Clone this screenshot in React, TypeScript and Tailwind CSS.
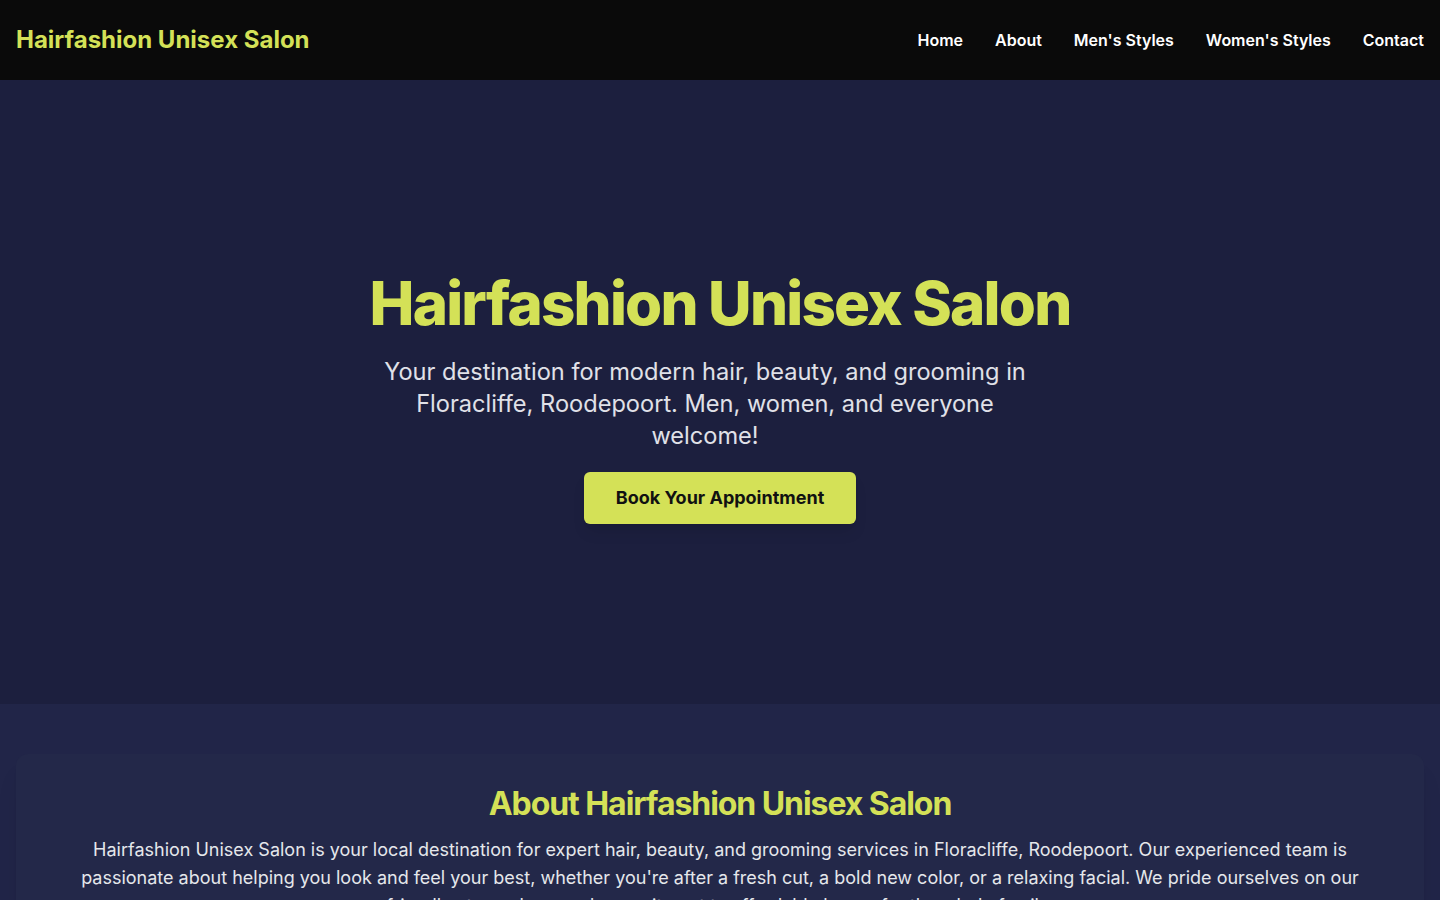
import React from "react";

const navLinks = ["Home", "About", "Men's Styles", "Women's Styles", "Contact"];

export default function App() {
  return (
    <div className="min-h-screen bg-[#1c1f3e] font-['Inter','Noto_Sans',sans-serif] text-white">
      {/* Top bar */}
      <header className="h-20 bg-[#0a0a0a] flex items-center justify-between px-4">
        <a href="#" className="text-2xl font-bold text-[#d4e157]">
          Hairfashion Unisex Salon
        </a>
        <nav className="flex items-center gap-8">
          {navLinks.map((link) => (
            <a key={link} href="#" className="text-base font-semibold text-white">
              {link}
            </a>
          ))}
        </nav>
      </header>

      {/* Hero */}
      <section className="h-[624px] bg-[#1c1f3e] flex flex-col items-center justify-center text-center px-4 pt-[9px]">
        <h1 className="text-[60px] leading-[1.1] font-extrabold tracking-[-0.03em] text-[#d4e157]">
          Hairfashion Unisex Salon
        </h1>
        <p className="mt-5 mr-[30px] max-w-[672px] text-[23.6px] leading-8 text-[#e0e1e8]">
          Your destination for modern hair, beauty, and grooming in Floracliffe, Roodepoort. Men, women, and everyone welcome!
        </p>
        <button className="mt-5 h-[52px] px-8 rounded-md bg-[#d4e157] text-[#111] text-lg font-bold shadow-lg">
          Book Your Appointment
        </button>
      </section>

      {/* About */}
      <section className="bg-[#212548] pt-[50px] pb-12 px-4">
        <div className="rounded-xl bg-[#232849] shadow-xl px-16 pt-[30px] pb-10 text-center">
          <h2 className="text-[32px] leading-10 font-bold tracking-[-0.033em] text-[#d4e157]">
            About Hairfashion Unisex Salon
          </h2>
          <p className="mt-3 text-lg leading-7 text-[#e5e7eb]">
            Hairfashion Unisex Salon is your local destination for expert hair, beauty, and grooming services in Floracliffe, Roodepoort. Our experienced team is passionate about helping you look and feel your best, whether you're after a fresh cut, a bold new color, or a relaxing facial. We pride ourselves on our friendly atmosphere and commitment to affordable luxury for the whole family.
          </p>
        </div>
      </section>
    </div>
  );
}
